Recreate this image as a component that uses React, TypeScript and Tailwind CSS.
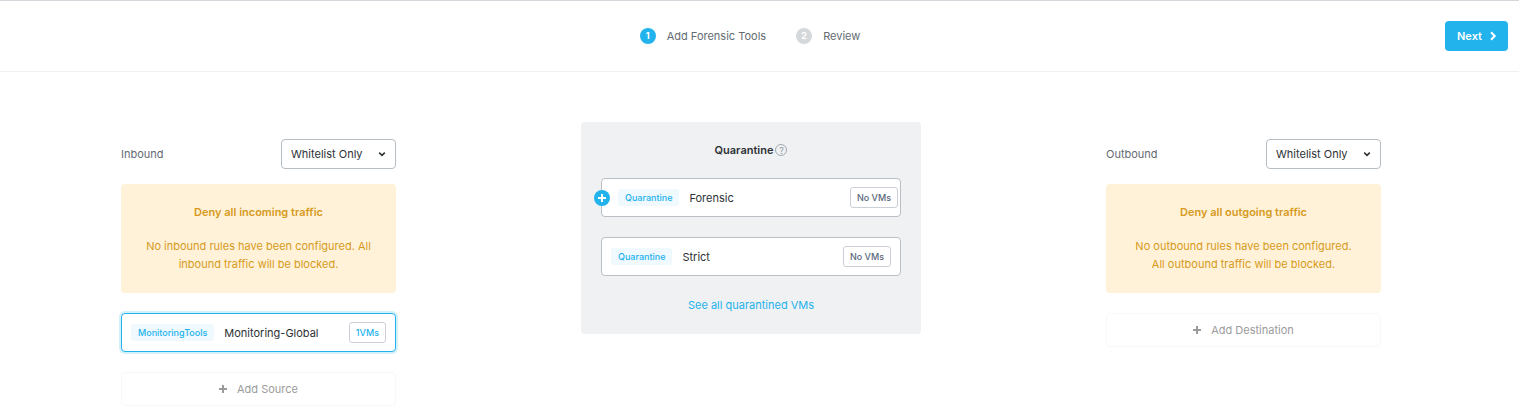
import type { ReactNode } from "react";
import clsx from "clsx";

type Direction = {
  id: string;
  label: string;
  title: string;
  message: string;
  addLabel: string;
};

const inbound: Direction = {
  id: "inbound",
  label: "Inbound",
  title: "Deny all incoming traffic",
  message: "No inbound rules have been configured. All inbound traffic will be blocked.",
  addLabel: "Add Source",
};

const outbound: Direction = {
  id: "outbound",
  label: "Outbound",
  title: "Deny all outgoing traffic",
  message: "No outbound rules have been configured. All outbound traffic will be blocked.",
  addLabel: "Add Destination",
};

function PlusIcon({ className }: { className?: string }) {
  return (
    <svg viewBox="0 0 8 8" className={clsx("size-2", className)} fill="none" stroke="currentColor" strokeWidth="2" aria-hidden="true">
      <path d="M4 0v8M0 4h8" />
    </svg>
  );
}

function Step({ number, label, active }: { number: number; label: string; active?: boolean }) {
  return (
    <li className="flex items-center gap-[11px]">
      <span
        className={clsx(
          "flex size-4 items-center justify-center rounded-full text-[9px] leading-4 font-bold text-white",
          active ? "bg-[#22b3ed]" : "bg-[#d5d8db]",
        )}
      >
        {number}
      </span>
      <span>{label}</span>
    </li>
  );
}

function Tag({ children }: { children: ReactNode }) {
  return <span className="rounded-[3px] bg-[#eff9fe] px-[7px] text-[9px] leading-[17px] font-medium text-[#22b3ed]">{children}</span>;
}

type GroupRowProps = {
  tag: string;
  name: string;
  count: string;
  state?: "selected" | "addable";
};

function GroupRow({ tag, name, count, state }: GroupRowProps) {
  return (
    <div
      className={clsx(
        "relative flex h-[39px] items-center rounded-[4px] border bg-white",
        state === "selected" ? "border-[#22b3ed] shadow-[0_0_0_2px_#d3f0fb]" : "border-[#b9bfc4]",
        state === "addable" ? "pr-0.5 pl-4" : "px-[9px]",
      )}
    >
      {state === "addable" && (
        <button
          type="button"
          aria-label={`Add ${name}`}
          className="absolute top-[11px] -left-2 flex size-4 items-center justify-center rounded-full bg-[#22b3ed] text-white"
        >
          <PlusIcon />
        </button>
      )}
      <Tag>{tag}</Tag>
      <span className="ml-2.5 text-[#2c3135]">{name}</span>
      <span
        className={clsx(
          "ml-auto rounded-[3px] border border-[#cbd0d8] bg-white px-1.5 text-[9px] leading-[19px] font-medium",
          state === "selected" ? "text-[#22b3ed]" : "text-[#59677c]",
        )}
      >
        {count}
      </span>
    </div>
  );
}

function TrafficColumn({ direction, children }: { direction: Direction; children?: ReactNode }) {
  return (
    <section className="mt-[17px] flex flex-col">
      <div className="flex items-center justify-between">
        <label htmlFor={direction.id}>{direction.label}</label>
        <div className="relative">
          <select
            id={direction.id}
            className="h-[30px] w-[115px] appearance-none rounded-[4px] border border-[#b6bdc3] bg-white pl-[9px] text-[#2c3135]"
          >
            <option>Whitelist Only</option>
            <option>Allow All</option>
          </select>
          <svg viewBox="0 0 6 4" className="pointer-events-none absolute top-[13px] right-[11px] h-1 w-1.5 overflow-visible" fill="none" stroke="#2c3135" strokeWidth="1.5" aria-hidden="true">
            <path d="M.2.6 3 3.4 5.8.6" />
          </svg>
        </div>
      </div>

      <div className="mt-[15px] rounded-[4px] bg-[#fff2d8] px-[22px] pt-[19px] pb-5 text-center leading-[18px] text-[#d79a1c]">
        <h2 className="mb-4 font-semibold">{direction.title}</h2>
        <p>{direction.message}</p>
      </div>

      <div className="mt-5 flex flex-col gap-5">
        {children}
        <button type="button" className="flex h-[34px] items-center justify-center gap-2.5 rounded-[4px] border border-[#f8f8f9] text-[#9b9b9b]">
          <PlusIcon />
          {direction.addLabel}
        </button>
      </div>
    </section>
  );
}

export default function App() {
  return (
    <div className="bg-white font-['Inter',sans-serif] text-[11px] leading-4 text-[#636b73]">
      <header className="grid h-[72px] grid-cols-[1fr_auto_1fr] items-center border-t border-b border-t-[#d3d7dc] border-b-[#f0f1f2] pr-[11px]">
        <ol className="col-start-2 flex gap-[30px] pr-2">
          <Step number={1} label="Add Forensic Tools" active />
          <Step number={2} label="Review" />
        </ol>
        <button type="button" className="flex h-[30px] w-[63px] items-center justify-center gap-2 justify-self-end rounded-[4px] bg-[#22b3ed] font-semibold text-white">
          Next
          <svg viewBox="0 0 6 8" className="h-2 w-1.5 overflow-visible" fill="none" stroke="currentColor" strokeWidth="2" aria-hidden="true">
            <path d="M1 .3 4.7 4 1 7.7" />
          </svg>
        </button>
      </header>

      <main className="grid grid-cols-[275px_340px_275px] items-start justify-between pt-[50px] pr-[138px] pl-[121px]">
        <TrafficColumn direction={inbound}>
          <GroupRow tag="MonitoringTools" name="Monitoring-Global" count="1VMs" state="selected" />
        </TrafficColumn>

        <section className="flex flex-col gap-5 rounded-[4px] bg-[#f0f1f3] p-5">
          <div className="flex h-4 items-center justify-center gap-0.5">
            <h2 className="font-semibold text-[#2c3135]">Quarantine</h2>
            <button type="button" aria-label="About quarantine" className="flex size-3 items-center justify-center rounded-full border border-[#a0a9b1] text-[9px] leading-none text-[#8e99a3]">
              ?
            </button>
          </div>
          <GroupRow tag="Quarantine" name="Forensic" count="No VMs" state="addable" />
          <GroupRow tag="Quarantine" name="Strict" count="No VMs" />
          <a href="#quarantined" className="self-center leading-[18px] text-[#22b3ed]">
            See all quarantined VMs
          </a>
        </section>

        <TrafficColumn direction={outbound} />
      </main>
    </div>
  );
}
